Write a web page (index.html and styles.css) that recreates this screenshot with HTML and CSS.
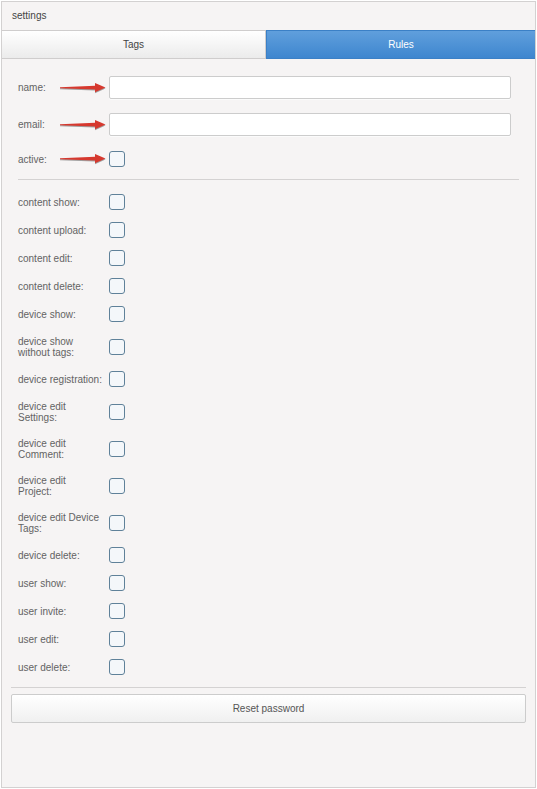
FILE: index.html
```html
<!DOCTYPE html>
<html>
<head>
<meta charset="utf-8">
<link rel="stylesheet" href="styles.css">
</head>
<body>
<div class="panel">
  <div class="header">settings</div>
  <div class="tabs">
    <div class="tab">Tags</div>
    <div class="tab active">Rules</div>
  </div>
  <div class="content">
    <div class="field">
      <label class="lbl">name:</label>
      <input class="text" type="text">
      <svg class="arrow" width="48" height="12" viewBox="0 0 48 12"><path d="M0 5.2 L35 3.8 L35 1 L45.5 5.6 L35 10.2 L35 7.4 L0 6.2 Z"/></svg>
    </div>
    <div class="field">
      <label class="lbl">email:</label>
      <input class="text" type="text">
      <svg class="arrow" width="48" height="12" viewBox="0 0 48 12"><path d="M0 5.2 L35 3.8 L35 1 L45.5 5.6 L35 10.2 L35 7.4 L0 6.2 Z"/></svg>
    </div>
    <div class="row first">
      <label class="lbl">active:</label>
      <span class="cb"></span>
      <svg class="arrow" width="48" height="12" viewBox="0 0 48 12"><path d="M0 5.2 L35 3.8 L35 1 L45.5 5.6 L35 10.2 L35 7.4 L0 6.2 Z"/></svg>
    </div>
    <hr class="sep">
    <div class="rules">
      <div class="row"><label class="lbl">content show:</label><span class="cb"></span></div>
      <div class="row"><label class="lbl">content upload:</label><span class="cb"></span></div>
      <div class="row"><label class="lbl">content edit:</label><span class="cb"></span></div>
      <div class="row"><label class="lbl">content delete:</label><span class="cb"></span></div>
      <div class="row"><label class="lbl">device show:</label><span class="cb"></span></div>
      <div class="row"><label class="lbl">device show<br>without tags:</label><span class="cb"></span></div>
      <div class="row"><label class="lbl">device registration:</label><span class="cb"></span></div>
      <div class="row"><label class="lbl">device edit<br>Settings:</label><span class="cb"></span></div>
      <div class="row"><label class="lbl">device edit<br>Comment:</label><span class="cb"></span></div>
      <div class="row"><label class="lbl">device edit<br>Project:</label><span class="cb"></span></div>
      <div class="row"><label class="lbl">device edit Device<br>Tags:</label><span class="cb"></span></div>
      <div class="row"><label class="lbl">device delete:</label><span class="cb"></span></div>
      <div class="row"><label class="lbl">user show:</label><span class="cb"></span></div>
      <div class="row"><label class="lbl">user invite:</label><span class="cb"></span></div>
      <div class="row"><label class="lbl">user edit:</label><span class="cb"></span></div>
      <div class="row"><label class="lbl">user delete:</label><span class="cb"></span></div>
    </div>
  </div>
  <div class="footer">
    <hr class="sep2">
    <button class="btn" type="button">Reset password</button>
  </div>
</div>
</body>
</html>
```

FILE: styles.css
```css
html, body {
  margin: 0;
  padding: 0;
  background: #ffffff;
}
body {
  font-family: "Liberation Sans", Arial, sans-serif;
  font-size: 10px;
  color: #636363;
}
.panel {
  box-sizing: border-box;
  margin: 1px 0 0 1px;
  width: 535px;
  height: 787px;
  border: 1px solid #d3d1d1;
  background: #f6f4f4;
}
.header {
  height: 28px;
  line-height: 28px;
  padding-left: 10px;
  color: #444;
}
.tabs {
  display: grid;
  grid-template-columns: 264px 1fr;
  height: 29px;
}
.tab {
  box-sizing: border-box;
  display: flex;
  align-items: center;
  justify-content: center;
  border: 1px solid #cfcdcd;
  border-left: none;
  background: linear-gradient(#ffffff, #ebebeb);
  color: #444;
}
.tab.active {
  border: 1px solid #3b80c6;
  border-right: none;
  background: linear-gradient(#609fdc, #3e86cf);
  color: #fff;
}
.content {
  padding: 17px 16px 0 16px;
}
.field {
  position: relative;
  display: flex;
  align-items: center;
  height: 23px;
  margin-bottom: 14px;
}
.lbl {
  box-sizing: border-box;
  width: 86px;
  margin-right: 5px;
  line-height: 11px;
  padding: 7.5px 0;
  color: #636363;
  white-space: nowrap;
}
.field .lbl {
  padding: 0;
}
.text {
  box-sizing: border-box;
  width: 402px;
  height: 23px;
  margin: 0;
  border: 1px solid #cccccc;
  border-radius: 2px;
  background: #fff;
  box-shadow: 0 1px 0 #fbfbfb;
}
.row {
  position: relative;
  display: flex;
  align-items: center;
  min-height: 28px;
}
.row.first {
  margin-top: -5px;
}
.cb {
  box-sizing: border-box;
  width: 16px;
  height: 16px;
  border: 1px solid #5f8199;
  border-radius: 3px;
  background: #f4f7fa;
}
.arrow {
  position: absolute;
  left: 42px;
  top: 50%;
  margin-top: -6px;
  fill: #d6382e;
  filter: drop-shadow(0.5px 1px 0.6px rgba(0,0,0,0.35));
}
.sep {
  border: none;
  border-top: 1px solid #d4d2d2;
  margin: 6px 0 8px 0;
}
.rules {
  display: flex;
  flex-direction: column;
}
.footer {
  padding: 0 9px;
}
.sep2 {
  border: none;
  border-top: 1px solid #d4d2d2;
  margin: 6px 0 6px 0;
}
.btn {
  display: block;
  box-sizing: border-box;
  width: 100%;
  height: 29px;
  border: 1px solid #cccccc;
  border-radius: 2px;
  background: linear-gradient(#ffffff, #f0f0f0);
  font-family: "Liberation Sans", Arial, sans-serif;
  font-size: 10px;
  color: #555;
}
```
